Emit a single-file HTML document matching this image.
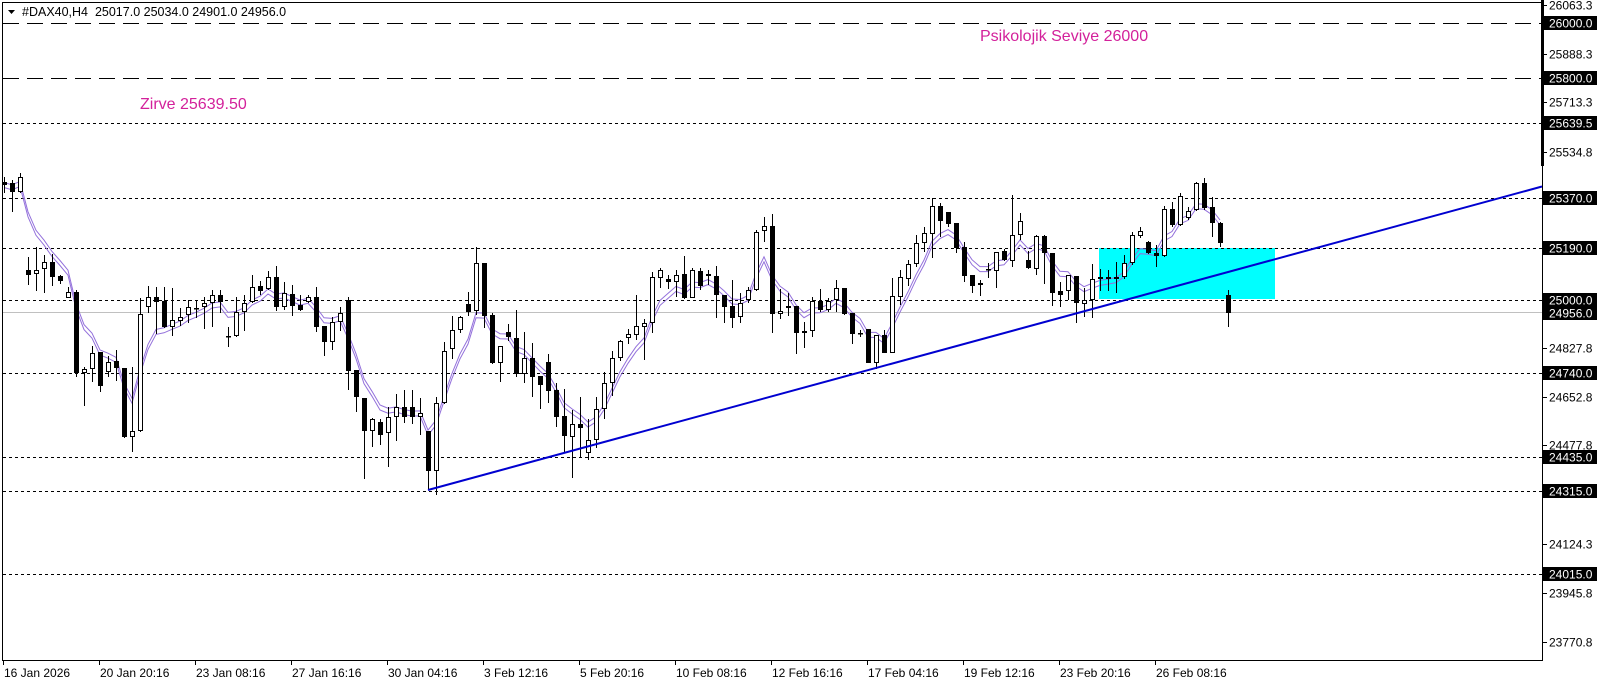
<!DOCTYPE html>
<html><head><meta charset="utf-8">
<style>
html,body{margin:0;padding:0;background:#fff;width:1606px;height:684px;overflow:hidden}
svg text{font-family:"Liberation Sans",Arial,sans-serif}
</style></head>
<body>
<div id="c"></div>
<script>
const D=[
['B',182,185,177,193],['B',183,192,180,212],['W',177,192,173,193],['B',270,275,257,285],['W',270,274,247,291],
['W',262,269,255,293],['B',262,277,254,286],['B',276,281,275,284],['W',292,298,287,298],['B',292,373,290,377],
['W',369,373,367,406],['W',353,369,346,382],['B',352,386,352,392],['W',362,372,356,377],['B',361,368,350,381],
['B',368,437,368,438],['W',431,437,367,452],['W',314,431,298,432],['W',297,307,286,313],['B',297,302,287,334],
['B',301,327,287,328],['W',320,327,288,336],['W',317,321,308,326],['W',307,315,300,323],['W',308,309,300,318],
['W',303,307,297,329],['W',295,303,290,327],['B',295,302,290,313],['W',336,337,327,347],['W',312,336,297,337],
['W',303,312,295,331],['W',287,302,275,303],['B',286,291,281,295],['W',277,289,271,290],['B',277,307,266,311],
['W',293,307,282,310],['B',294,306,285,316],['B',305,310,295,311],['W',297,302,295,303],['B',297,327,287,332],
['B',326,342,326,356],['W',322,342,317,350],['W',313,322,307,331],['B',300,371,297,390],['B',370,397,370,412],
['B',398,431,398,479],['W',419,431,418,447],['B',422,435,419,445],['W',417,433,407,467],['W',407,417,394,441],
['B',407,417,390,423],
['B',407,417,390,424],['W',413,417,398,435],['B',431,471,431,490],['W',403,471,397,495],['W',351,403,342,404],
['W',330,349,316,359],['W',317,330,316,333],['B',304,312,292,316],['W',263,311,247,315],['B',263,316,263,328],
['B',315,363,313,364],['W',346,363,346,382],['B',332,337,324,341],['B',338,374,310,377],['W',358,374,332,383],
['B',358,377,343,397],['B',376,385,376,409],['B',362,391,354,403],['B',390,417,383,427],['B',416,436,389,453],
['W',424,437,410,478],['B',424,428,397,458],['W',440,453,419,460],['W',409,440,397,448],['W',383,409,372,419],
['W',358,383,351,396],['W',341,358,340,361],['W',334,338,329,344],['W',326,335,295,340],['W',323,327,319,360],
['W',277,323,272,333],['W',270,278,268,288],['B',279,282,275,289],['W',275,282,270,297],['B',274,298,256,299],
['W',270,298,268,298],['B',271,286,268,290],['B',274,276,270,285],['B',276,295,266,318],['B',295,307,295,323],
['B',306,318,280,328],['W',303,317,293,323],['W',290,300,287,303],['W',232,290,230,291],['W',226,231,217,242],
['B',226,314,214,333],['W',311,314,289,319],['W',306,308,293,316],['B',306,333,306,354],['W',331,333,322,348],
['W',301,331,297,337],['B',301,310,289,312],['W',301,310,298,312],
['W',288,300,280,312],['B',288,314,288,315],['B',313,334,313,344],['W',333,334,330,337],['B',329,363,329,363],
['W',335,363,335,369],['B',335,353,330,353],['W',296,353,278,353],['W',277,297,270,305],['W',264,279,260,286],
['W',243,264,235,267],['W',233,243,227,252],['W',206,234,198,258],['B',206,221,203,237],['B',212,224,212,227],
['B',223,248,223,253],['B',247,276,242,282],['B',275,286,275,293],['W',283,285,280,296],['W',269,270,263,278],
['W',252,271,252,288],['B',251,260,249,261],['W',235,261,195,267],['W',221,235,213,240],['B',260,268,251,269],
['W',236,269,235,275],['B',236,253,235,284],['B',253,293,253,306],['B',291,295,282,307],['W',275,291,275,300],
['B',276,303,276,323],['W',300,304,288,317],['W',279,300,264,318],['W',277,279,269,291],['B',277,279,270,291],
['W',277,279,262,293],['W',263,277,255,279],['W',235,263,232,265],['W',231,236,227,238],['B',242,253,241,254],
['B',253,256,245,267],['W',209,256,206,257],['B',209,225,202,227],['W',196,225,193,226],['W',211,218,207,220],
['W',183,210,182,211],['B',183,208,178,210],['B',207,223,197,237],['B',223,243,222,247],['B',295,313,290,327]
];
const Y=p=>22.7+(26000-p)*0.2777;
let s='<svg xmlns="http://www.w3.org/2000/svg" width="1606" height="684" viewBox="0 0 1606 684">';
s+='<rect x="0" y="0" width="1606" height="684" fill="#fff"/>';
s+='<rect x="1099" y="248" width="176" height="51" fill="#00ffff"/>';
s+='<line x1="3" y1="312.5" x2="1542" y2="312.5" stroke="#c0c0c0" stroke-width="1"/>';
[26000,25800].forEach(p=>{const y=Math.round(Y(p))+0.5;s+=`<line x1="3" y1="${y}" x2="1542" y2="${y}" stroke="#000" stroke-dasharray="16,8"/>`;});
[25639.5,25370,25190,25000,24740,24435,24315,24015].forEach(p=>{const y=Math.round(Y(p))+0.5;s+=`<line x1="3" y1="${y}" x2="1542" y2="${y}" stroke="#000" stroke-dasharray="3,3"/>`;});
let e=null,pts1=[],pts2=[];
D.forEach((d,i)=>{const c=d[0]=='W'?d[1]:d[2];e=e===null?c:e+(c-e)*2/6;if(i<D.length-1){const x=4+8*i;pts1.push(x+','+(e-2.5).toFixed(1));pts2.push(x+','+(e+2.5).toFixed(1));}});
s+=`<polyline points="${pts1.join(' ')}" fill="none" stroke="#9370db" stroke-width="1"/>`;
s+=`<polyline points="${pts2.join(' ')}" fill="none" stroke="#9370db" stroke-width="1"/>`;
D.forEach((d,i)=>{const x=4+8*i+0.5;const[t,bt,bb,h,l]=d;
s+=`<line x1="${x}" y1="${h}" x2="${x}" y2="${l}" stroke="#000"/>`;
const hh=Math.max(bb-bt,1);
if(t=='B')s+=`<rect x="${x-2.5}" y="${bt}" width="5" height="${hh}" fill="#000"/>`;
else s+=`<rect x="${x-2}" y="${bt+0.5}" width="4" height="${Math.max(hh-1,0.5)}" fill="#fff" stroke="#000"/>`;
});
s+='<line x1="428" y1="490" x2="1542" y2="186.5" stroke="#0000d0" stroke-width="2"/>';
s+='<line x1="2.5" y1="2" x2="2.5" y2="660" stroke="#000"/>';
s+='<line x1="2" y1="2.5" x2="1542" y2="2.5" stroke="#000"/>';
s+='<line x1="2" y1="660.5" x2="1543" y2="660.5" stroke="#000"/>';
s+='<line x1="1542.5" y1="0" x2="1542.5" y2="661" stroke="#000"/>';
s+='<rect x="1541" y="0" width="3" height="166" fill="#000"/>';
s+='<text x="980" y="41" font-size="16" fill="#d3219b">Psikolojik Seviye 26000</text>';
s+='<text x="140" y="109" font-size="16" fill="#d3219b">Zirve 25639.50</text>';
s+='<path d="M8 10 L15 10 L11.5 14 Z" fill="#000"/>';
s+='<text x="22" y="16" font-size="12.5" fill="#000" xml:space="preserve">#DAX40,H4  25017.0 25034.0 24901.0 24956.0</text>';
[26063.3,25888.3,25713.3,25534.8,24827.8,24652.8,24477.8,24124.3,23945.8,23770.8].forEach(p=>{const y=Math.round(Y(p));
s+=`<line x1="1543" y1="${y+0.5}" x2="1547" y2="${y+0.5}" stroke="#000"/><text x="1549" y="${y+4.5}" font-size="12" fill="#000">${p.toFixed(1)}</text>`;});
[26000,25800,25639.5,25370,25190,25000,24956,24740,24435,24315,24015].forEach(p=>{const y=Math.round(Y(p));
s+=`<rect x="1543" y="${y-7}" width="54" height="14" fill="#000"/><text x="1549" y="${y+4.5}" font-size="12" fill="#fff">${p.toFixed(1)}</text>`;});
const T=['16 Jan 2026','20 Jan 20:16','23 Jan 08:16','27 Jan 16:16','30 Jan 04:16','3 Feb 12:16','5 Feb 20:16','10 Feb 08:16','12 Feb 16:16','17 Feb 04:16','19 Feb 12:16','23 Feb 20:16','26 Feb 08:16'];
T.forEach((t,k)=>{const x=3+96*k;s+=`<line x1="${x+0.5}" y1="660" x2="${x+0.5}" y2="665" stroke="#000"/><text x="${x+1}" y="677" font-size="12" fill="#000">${t}</text>`;});
s+='</svg>';
document.getElementById('c').innerHTML=s;
</script>
</body></html>
